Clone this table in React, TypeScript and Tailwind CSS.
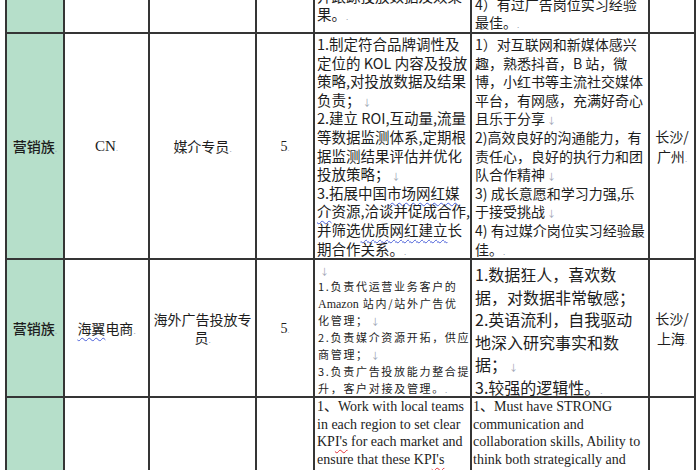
import React from 'react';

const cell = 'border-r-2 border-b-2 border-[#353535]';
const green = 'bg-[#b6dfca]';

function Mark() {
  return <span className="ml-[2px] text-[9px] leading-[0] text-gray-400">↓</span>;
}

function End() {
  return <span className="text-[8px] leading-[0] text-gray-400">.</span>;
}

function Blue({ children }: { children: React.ReactNode }) {
  return (
    <span className="underline decoration-wavy decoration-[#4a5fd8] decoration-1 underline-offset-[3px]">
      {children}
    </span>
  );
}

function Red({ children }: { children: React.ReactNode }) {
  return (
    <span className="underline decoration-wavy decoration-[#e0303a] decoration-1 underline-offset-[3px]">
      {children}
    </span>
  );
}

function Lines({
  lines,
  className,
  lineClass,
}: {
  lines: React.ReactNode[];
  className: string;
  lineClass: string;
}) {
  return (
    <div className={className}>
      {lines.map((l, i) => (
        <div key={i} className={`whitespace-nowrap ${lineClass}`}>
          {l}
        </div>
      ))}
    </div>
  );
}

function Center({ children, className = '' }: { children: React.ReactNode; className?: string }) {
  return (
    <div className={`${cell} flex items-center justify-center text-center ${className}`}>
      <div>{children}</div>
    </div>
  );
}

export default function App() {
  return (
    <div className="h-[470px] w-[700px] overflow-hidden bg-white text-[#1d1d1d] [font-family:'Noto_Sans_CJK_SC',sans-serif]">
      <div className="ml-[5px] grid grid-cols-[58px_85px_107px_58px_157px_178px_46px] grid-rows-[34px_226px_138px_80px] border-l-2 border-[#353535]">
        {/* row 1, cut at the top */}
        <div className={`${cell} ${green}`} />
        <div className={cell} />
        <div className={cell} />
        <div className={cell} />
        <div className={`${cell} flex flex-col justify-end overflow-hidden pb-[8px] pl-[2px] text-[14.5px] leading-[18.6px]`}>
          <div className="h-[18.6px] whitespace-nowrap">并跟踪投放数据及效果（结</div>
          <div className="h-[18.6px] whitespace-nowrap">
            果。<End />
          </div>
        </div>
        <div className={`${cell} flex flex-col justify-end overflow-hidden pl-[3px] text-[14px] leading-[18.6px]`}>
          <div className="h-[18.6px] whitespace-nowrap">4）有过广告岗位实习经验</div>
          <div className="h-[18.6px] whitespace-nowrap">
            最佳。<End />
          </div>
        </div>
        <div className={cell} />

        {/* row 2 */}
        <Center className={`${green} text-[14px] font-medium`}>
          营销族<End />
        </Center>
        <Center className="text-[15px] [font-family:'Liberation_Serif',serif]">
          CN<End />
        </Center>
        <Center className="text-[14px]">
          媒介专员<End />
        </Center>
        <Center className="text-[14px] [font-family:'Liberation_Serif',serif]">
          5<End />
        </Center>
        <div className={`${cell} pl-[2px] pt-[1px]`}>
          <Lines
            className="text-[14.5px] leading-[18.6px]"
            lineClass="h-[18.6px]"
            lines={[
              '1.制定符合品牌调性及',
              '定位的 KOL 内容及投放',
              '策略,对投放数据及结果',
              <>负责；<Mark /></>,
              '2.建立 ROI,互动量,流量',
              '等数据监测体系,定期根',
              '据监测结果评估并优化',
              <>投放策略；<Mark /></>,
              <>3.拓展中国<Blue>市场网红媒</Blue></>,
              <><Blue>介</Blue>资源,洽谈并促成合作,</>,
              <>并筛选<Blue>优质网红建立</Blue>长</>,
              <>期合作关系。<End /></>,
            ]}
          />
        </div>
        <div className={`${cell} pl-[3px] pt-[1px]`}>
          <Lines
            className="text-[14px] leading-[18.6px]"
            lineClass="h-[18.6px]"
            lines={[
              '1）对互联网和新媒体感兴',
              '趣，熟悉抖音，B 站，微',
              '博，小红书等主流社交媒体',
              '平台，有网感，充满好奇心',
              <>且乐于分享<Mark /></>,
              '2)高效良好的沟通能力，有',
              '责任心，良好的执行力和团',
              <>队合作精神<Mark /></>,
              '3) 成长意愿和学习力强,乐',
              <>于接受挑战<Mark /></>,
              '4) 有过媒介岗位实习经验最',
              <>佳。<End /></>,
            ]}
          />
        </div>
        <Center className="text-[14px] leading-[20px]">
          长沙/
          <br />
          广州<End />
        </Center>

        {/* row 3 */}
        <Center className={`${green} text-[14px] font-medium`}>
          营销族<End />
        </Center>
        <Center className="text-[14px]">
          <Blue>海翼</Blue>电商<End />
        </Center>
        <Center className="px-[3px] text-[14px] leading-[18px]">
          海外广告投放专员<End />
        </Center>
        <Center className="text-[14px] [font-family:'Liberation_Serif',serif]">
          5<End />
        </Center>
        <div className={`${cell} pl-[3px] pt-[1.5px]`}>
          <Lines
            className="text-[11px] leading-[16.9px] tracking-[1.7px]"
            lineClass="h-[16.9px]"
            lines={[
              <Mark />,
              '1.负责代运营业务客户的',
              <>
                <span className="text-[12px] tracking-normal [font-family:'Liberation_Serif',serif]">Amazon</span> 站内/站外广告优
              </>,
              <>化管理；<Mark /></>,
              '2.负责媒介资源开拓，供应',
              <>商管理；<Mark /></>,
              '3.负责广告投放能力整合提',
              <>升，客户对接及管理。<End /></>,
            ]}
          />
        </div>
        <div className={`${cell} pl-[3px] pt-[3px]`}>
          <Lines
            className="text-[16px] leading-[22.6px]"
            lineClass="h-[22.6px]"
            lines={[
              '1.数据狂人，喜欢数',
              '据，对数据非常敏感；',
              '2.英语流利，自我驱动',
              '地深入研究事实和数',
              <>据；<Mark /></>,
              <>3.较强的逻辑性。<End /></>,
            ]}
          />
        </div>
        <Center className="text-[14px] leading-[20px]">
          长沙/
          <br />
          上海<End />
        </Center>

        {/* row 4, cut at the bottom */}
        <div className={`${cell} ${green}`} />
        <div className={cell} />
        <div className={cell} />
        <div className={cell} />
        <div className={`${cell} pl-[2px]`}>
          <Lines
            className="text-[14px] leading-[17.5px] [font-family:'Liberation_Serif','Noto_Sans_CJK_SC',serif]"
            lineClass="h-[17.5px]"
            lines={[
              '1、Work with local teams',
              'in each region to set clear',
              <>KP<Red>I's</Red> for each market and</>,
              <>ensure that these KP<Red>I's</Red></>,
            ]}
          />
        </div>
        <div className={`${cell} pl-[1px]`}>
          <Lines
            className="text-[14px] leading-[17.5px] [font-family:'Liberation_Serif','Noto_Sans_CJK_SC',serif]"
            lineClass="h-[17.5px]"
            lines={[
              '1、Must have STRONG',
              'communication and',
              'collaboration skills, Ability to',
              'think both strategically and',
            ]}
          />
        </div>
        <div className={cell} />
      </div>
    </div>
  );
}
